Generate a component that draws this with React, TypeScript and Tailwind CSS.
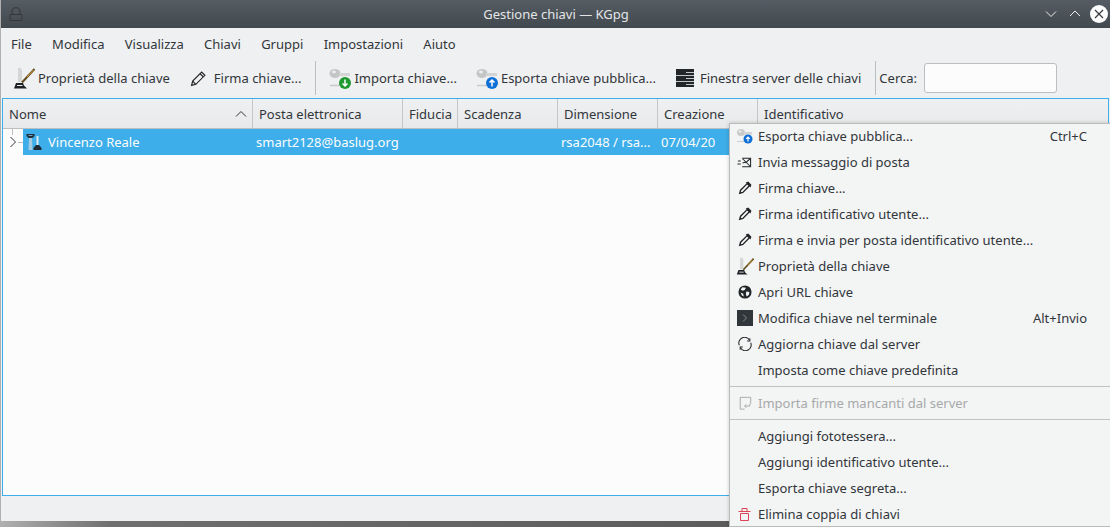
import React from 'react';

const FONT = 'font-["Noto_Sans",sans-serif]';

type Column = { label: string, width: string };

const COLUMNS: Column[] = [
  { label: 'Nome', width: 'w-[250px]' },
  { label: 'Posta elettronica', width: 'w-[150px]' },
  { label: 'Fiducia', width: 'w-[55px]' },
  { label: 'Scadenza', width: 'w-[100px]' },
  { label: 'Dimensione', width: 'w-[100px]' },
  { label: 'Creazione', width: 'w-[100px]' },
  { label: 'Identificativo', width: 'flex-1' },
];

function KeyBadge({ color, dir }: { color: string, dir: 'up' | 'down' }) {
  return (
    <svg width="24" height="22" viewBox="0 0 24 22" className="shrink-0">
      <ellipse cx="7" cy="6.5" rx="5.5" ry="4.5" fill="#c4c6c6" />
      <ellipse cx="6" cy="5" rx="2" ry="1.4" fill="#eceded" />
      <rect x="11" y="6" width="11" height="3" fill="#d3d5d5" />
      <path d="M2 18.5 H15" stroke="#c9cbcb" strokeWidth="1.5" />
      <circle cx="17" cy="16" r="6" fill={color} />
      {dir === 'down'
        ? <path d="M17 12.5 V19 M14.5 16.5 L17 19 L19.5 16.5" stroke="#fff" strokeWidth="1.5" fill="none" />
        : <path d="M17 19.5 V13 M14.5 15.5 L17 13 L19.5 15.5" stroke="#fff" strokeWidth="1.5" fill="none" />}
    </svg>
  );
}

function SmallKeyBadge() {
  return (
    <svg width="18" height="16" viewBox="0 0 18 16" className="shrink-0">
      <ellipse cx="5" cy="4.5" rx="4" ry="3.5" fill="#c9cbcb" />
      <ellipse cx="4" cy="3.5" rx="1.5" ry="1" fill="#eceded" />
      <rect x="8" y="4" width="8" height="2.5" fill="#d3d5d5" />
      <path d="M1 13.5 H10" stroke="#c9cbcb" strokeWidth="1" />
      <circle cx="12" cy="11" r="4.5" fill="#0f6fd6" />
      <path d="M12 13.5 V9 M10.2 10.8 L12 9 L13.8 10.8" stroke="#fff" strokeWidth="1.2" fill="none" />
    </svg>
  );
}

function BrushKey({ size }: { size: number }) {
  return (
    <svg width={size} height={size} viewBox="0 0 22 22" className="shrink-0">
      <path d="M5 1 L8 1 L9 4 L9 15 L5 15 Z" fill="#d4d6d6" />
      <path d="M21.5 2 L9 15.5" stroke="#5f4a1c" strokeWidth="2" />
      <path d="M20.5 3 L14 10" stroke="#d9a531" strokeWidth="1" />
      <path d="M1 21.5 L3 16 L10 16 L11 18.5 L14 21.5 Z" fill="#1f2225" />
      <path d="M4 18.5 L9.5 18.5" stroke="#eff0f1" strokeWidth="1" />
    </svg>
  );
}

function PencilLine({ size }: { size: number }) {
  return (
    <svg width={size} height={size} viewBox="0 0 16 16" className="shrink-0" fill="none" stroke="#232629" strokeWidth="1.1">
      <path d="M1.5 14.5 L2.5 10.5 L11 2 L14 5 L5.5 13.5 Z" />
      <path d="M9.5 3.5 L12.5 6.5" />
      <path d="M2.5 10.5 L5.5 13.5" />
    </svg>
  );
}

function PencilSolid() {
  return (
    <svg width="14" height="14" viewBox="0 0 16 16" className="shrink-0">
      <path d="M2 14 L3 10.5 L10.5 3 L13 5.5 L5.5 13 Z" fill="#fff" stroke="#232629" strokeWidth="1.6" />
      <path d="M10 2 L11.5 1.5 L14.5 4.5 L14 6 Z" fill="#232629" stroke="#232629" strokeWidth="1.4" />
    </svg>
  );
}

function MenuIcon({ name }: { name: string }) {
  switch (name) {
    case 'export':
      return <SmallKeyBadge />;
    case 'mail':
      return (
        <svg width="15" height="15" viewBox="0 0 16 16" fill="none" stroke="#232629" strokeWidth="1.1">
          <path d="M5.5 3.5 H14.5 V12.5 H5.5" />
          <path d="M6 4 L14 12 M6 8.5 L9.5 7.5 M14 4 L9 8.5" />
          <path d="M1 6.5 H4 M0.5 9.5 H4" />
        </svg>
      );
    case 'pencil':
      return <PencilSolid />;
    case 'brush':
      return <BrushKey size={18} />;
    case 'globe':
      return (
        <svg width="14" height="14" viewBox="0 0 16 16">
          <circle cx="8" cy="8" r="7.5" fill="#232629" />
          <path d="M5 2.5 L9 3 L8 5.5 L5.5 6.5 L3 5 Z M9.5 7.5 L13 8 L12.5 11 L10 13 L9 10.5 Z M3 8.5 L6 10 L6.5 13 L4.5 12 Z" fill="#f4f5f5" />
        </svg>
      );
    case 'terminal':
      return (
        <svg width="16" height="16" viewBox="0 0 16 16">
          <rect width="16" height="16" fill="#31363b" />
          <path d="M6 4.5 L9.5 8 L6 11.5" fill="none" stroke="#7f8c8d" strokeWidth="1" />
        </svg>
      );
    case 'refresh':
      return (
        <svg width="14" height="14" viewBox="0 0 16 16" fill="none" stroke="#232629" strokeWidth="1.2">
          <path d="M1.5 9.5 A6.5 6.5 0 0 1 13 3.5" />
          <path d="M14.5 6.5 A6.5 6.5 0 0 1 3 12.5" />
          <path d="M10.5 4.5 H13.5 V1.5" />
          <path d="M5.5 11.5 H2.5 V14.5" />
        </svg>
      );
    case 'import':
      return (
        <svg width="14" height="14" viewBox="0 0 16 16" fill="none" stroke="#a7a9aa" strokeWidth="1.1">
          <path d="M7.5 15 H2.5 V1.5 H14.5 V9" />
          <path d="M13.5 9 V11.5 H7.5 M9.5 9.5 L7.5 11.5 L9.5 13.5" />
        </svg>
      );
    case 'trash':
      return (
        <svg width="13" height="13" viewBox="0 0 13 13" fill="none" stroke="#da4453" strokeWidth="1">
          <path d="M0.5 3.5 H12.5 M4 3.5 V0.5 H9 V3.5" />
          <path d="M2.5 5.5 H10.5 V12.5 H2.5 Z" />
        </svg>
      );
    default:
      return null;
  }
}

function ContextItem({ icon, label, shortcut, disabled }: { icon?: string, label: string, shortcut?: string, disabled?: boolean }) {
  return (
    <div className={`flex h-[26px] items-center pr-[23px] ${disabled ? 'text-[#a7a9aa]' : 'text-[#31363b]'}`}>
      <div className="flex w-[28px] shrink-0 justify-center pl-[1px]">{icon && <MenuIcon name={icon} />}</div>
      <span className="flex-1 whitespace-nowrap">{label}</span>
      {shortcut && <span>{shortcut}</span>}
    </div>
  );
}

function ToolbarSeparator() {
  return <div className="h-[34px] w-px shrink-0 bg-[#bcbebf]" />;
}

export default function App() {
  return (
    <div className={`${FONT} h-[527px] w-[1110px] overflow-hidden bg-gradient-to-r from-[#b0b0b0] via-[#6f6f6f] via-10% to-[#505050] text-[13px] leading-[18px] text-[#31363b]`}>
      <div className="relative ml-px flex h-[521px] flex-col bg-[#eff0f1]">
        {/* title bar */}
        <div className="relative flex h-[28px] shrink-0 items-center justify-center bg-gradient-to-b from-[#565c63] to-[#41484e] text-[#e3e5e7]">
          <svg width="14" height="16" viewBox="0 0 14 16" className="absolute left-[8px] top-[6px]" fill="none" stroke="#33383d" strokeWidth="1">
            <path d="M3 8 V5 A4 3.5 0 0 1 11 5 V8" />
            <path d="M1 8.5 H13 V14.5 H1 Z" />
          </svg>
          <span className="pl-[1px]">Gestione chiavi — KGpg</span>
          <div className="absolute right-[2px] top-[5px] flex items-center gap-[6px]">
            <svg width="18" height="18" viewBox="0 0 18 18" fill="none" stroke="#eff0f1" strokeWidth="1"><path d="M4 6.5 L9 11.5 L14 6.5" /></svg>
            <svg width="18" height="18" viewBox="0 0 18 18" fill="none" stroke="#eff0f1" strokeWidth="1"><path d="M4 11 L9 6 L14 11" /></svg>
            <svg width="18" height="18" viewBox="0 0 18 18" fill="none" stroke="#31363b" strokeWidth="1.1">
              <circle cx="9" cy="9" r="9" fill="#fcfcfc" stroke="none" />
              <path d="M5 5 L13 13 M13 5 L5 13" />
            </svg>
          </div>
        </div>

        {/* menu bar */}
        <div className="flex h-[32px] shrink-0 items-center gap-[20.3px] pl-[10px]">
          {['File', 'Modifica', 'Visualizza', 'Chiavi', 'Gruppi', 'Impostazioni', 'Aiuto'].map((m) => (
            <span key={m}>{m}</span>
          ))}
        </div>

        {/* toolbar */}
        <div className="flex h-[38px] shrink-0 items-center pb-[2px] pl-[12px] whitespace-nowrap">
          <BrushKey size={22} />
          <span className="ml-[3px]">Proprietà della chiave</span>
          <div className="ml-[20px]"><PencilLine size={17} /></div>
          <span className="ml-[7px]">Firma chiave...</span>
          <div className="ml-[14px]"><ToolbarSeparator /></div>
          <div className="ml-[12px]"><KeyBadge color="#1e9a2e" dir="down" /></div>
          <span className="ml-[2px]">Importa chiave...</span>
          <div className="ml-[18px]"><KeyBadge color="#0f6fd6" dir="up" /></div>
          <span className="ml-[2px]">Esporta chiave pubblica...</span>
          <svg width="18" height="18" viewBox="0 0 18 18" className="ml-[20px] shrink-0">
            <rect width="18" height="18" fill="#232629" />
            <path d="M10 3.5 H18 M0 6.5 H18 M10 9.5 H18 M0 12.5 H18 M10 15.5 H18" stroke="#eff0f1" strokeWidth="0.8" />
          </svg>
          <span className="ml-[6px]">Finestra server delle chiavi</span>
          <div className="ml-[14px]"><ToolbarSeparator /></div>
          <span className="ml-[3px]">Cerca:</span>
          <div className="ml-[7px] h-[30px] w-[133px] rounded-[3px] border border-[#bcbebf] bg-[#fcfcfc]" />
        </div>

        {/* key list */}
        <div className="ml-px mr-px flex h-[398px] shrink-0 flex-col border border-[#3daee9] bg-[#fcfcfc]">
          <div className="flex h-[30px] shrink-0 border-b border-[#bcbebf] bg-gradient-to-b from-[#eff0f1] to-[#e8e9ea]">
            {COLUMNS.map((c, i) => (
              <div key={c.label} className={`${c.width} flex items-center justify-between pl-[6px] pr-[5px] ${i < 6 ? 'border-r border-[#c4c6c7]' : ''}`}>
                <span>{c.label}</span>
                {i === 0 && (
                  <svg width="12" height="8" viewBox="0 0 12 8" fill="none" stroke="#31363b" strokeWidth="1"><path d="M1 6.5 L6 1.5 L11 6.5" /></svg>
                )}
              </div>
            ))}
          </div>
          <div className="flex h-[26px] shrink-0">
            <svg width="20" height="26" viewBox="0 0 20 26" className="shrink-0" fill="none">
              <path d="M9.5 0 V6 M15 13.5 H20" stroke="#bcbebf" strokeWidth="1" />
              <path d="M7.5 8 L12.5 13 L7.5 18" stroke="#31363b" strokeWidth="1" />
            </svg>
            <div className="flex flex-1 items-center bg-[#3daee9] text-[#fcfcfc]">
              <svg width="16" height="18" viewBox="0 0 16 18" className="ml-[3px] shrink-0">
                <path d="M0.5 1 H8.5 V3 L6.5 5 H2.5 L0.5 3 Z" fill="#232e3a" />
                <path d="M2.5 2 H6.5 V3 H2.5 Z" fill="#6ea7cc" />
                <path d="M3 5 H6 L6.5 17 H2.5 Z" fill="#a4cbe2" />
                <path d="M10.5 3 H12.5 V12 H10.5 Z" fill="#dfe8ee" />
                <path d="M7.5 15 L10 12 H13 L15.5 15 V17 H7.5 Z" fill="#1e2a36" />
              </svg>
              <span className="ml-[6px] w-[208px]">Vincenzo Reale</span>
              <span className="w-[305px]">smart2128@baslug.org</span>
              <span className="w-[100px]">rsa2048 / rsa...</span>
              <span>07/04/20</span>
            </div>
          </div>
        </div>

        {/* context menu */}
        <div className="absolute left-[728px] top-[123px] h-[404px] w-[381px] border-t border-b border-l border-[#b9bbbc] bg-[#f3f4f4] shadow-[0_0_4px_rgba(0,0,0,0.2)]">
          <div className="-mt-px">
            <ContextItem icon="export" label="Esporta chiave pubblica..." shortcut="Ctrl+C" />
            <ContextItem icon="mail" label="Invia messaggio di posta" />
            <ContextItem icon="pencil" label="Firma chiave..." />
            <ContextItem icon="pencil" label="Firma identificativo utente..." />
            <ContextItem icon="pencil" label="Firma e invia per posta identificativo utente..." />
            <ContextItem icon="brush" label="Proprietà della chiave" />
            <ContextItem icon="globe" label="Apri URL chiave" />
            <ContextItem icon="terminal" label="Modifica chiave nel terminale" shortcut="Alt+Invio" />
            <ContextItem icon="refresh" label="Aggiorna chiave dal server" />
            <ContextItem label="Imposta come chiave predefinita" />
            <div className="my-[3px] h-px bg-[#c0c2c3]" />
            <ContextItem icon="import" label="Importa firme mancanti dal server" disabled />
            <div className="my-[3px] h-px bg-[#c0c2c3]" />
            <ContextItem label="Aggiungi fototessera..." />
            <ContextItem label="Aggiungi identificativo utente..." />
            <ContextItem label="Esporta chiave segreta..." />
            <ContextItem icon="trash" label="Elimina coppia di chiavi" />
          </div>
        </div>
      </div>
    </div>
  );
}
